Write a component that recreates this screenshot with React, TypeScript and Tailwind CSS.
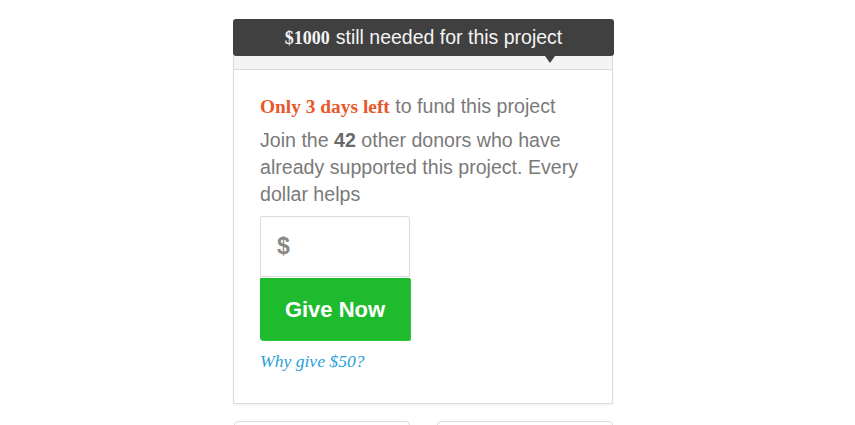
export default function App() {
  const sans = { fontFamily: '"Liberation Sans", Arial, sans-serif' };
  return (
    <div className="w-[855px] h-[425px] bg-white overflow-hidden" style={sans}>
      <div className="pl-[233px] pt-[19px]">
        <div className="w-[381px] relative">
          <div className="relative z-10 h-[37px] bg-[#404040] rounded-[3px] flex items-center justify-center text-[19.5px] text-[#f4f4f4]">
            <span style={{ fontFamily: '"Liberation Serif", serif' }} className="font-bold text-[18px] mr-[6px] mt-[2px]">$1000</span>
            <span>still needed for this project</span>
            <div className="absolute left-[312px] top-[37px] w-0 h-0 border-l-[5px] border-r-[5px] border-t-[7px] border-l-transparent border-r-transparent border-t-[#404040]" />
          </div>
          <div className="w-[380px] border-x border-b border-[#dcdcdc] shadow-[0_1px_2px_rgba(0,0,0,0.06)]">
            <div className="h-[14px] bg-[#f4f4f4] border-b border-[#dcdcdc]" />
            <div className="pl-[26px] pr-[20px] pt-[23px] pb-[31px]">
              <div className="text-[19.6px] leading-[27px] text-[#7a7a7a]">
                <span style={{ fontFamily: '"Liberation Serif", serif' }} className="font-bold text-[19.4px] text-[#e8572a]">Only 3 days left</span>{' '}
                to fund this project
              </div>
              <p className="mt-[7px] text-[19.6px] leading-[27px] text-[#7a7a7a]">
                Join the <b className="text-[#6a6a6a]">42</b> other donors who have already supported this project. Every dollar helps
              </p>
              <div className="mt-[8px] w-[150px] h-[61px] border border-[#dcdcdc] rounded-t-[2px] flex items-center pl-[16px] text-[23px] font-bold text-[#888]">
                $
              </div>
              <button className="mt-[1px] w-[150px] h-[62px] bg-[#1fbb2f] rounded-b-[2px] text-white font-bold text-[22px] flex items-center justify-center shadow-[1px_1px_0_#26c93a]">
                Give Now
              </button>
              <div style={{ fontFamily: '"Liberation Serif", serif' }} className="mt-[10px] italic text-[17.6px] text-[#2a9fd6] leading-[22px]">
                Why give $50?
              </div>
            </div>
          </div>
          <div className="mt-[17px] flex gap-[27px] pl-[1px]">
            <div className="w-[176px] h-[20px] border border-[#dcdcdc] rounded-t-[4px]" />
            <div className="w-[176px] h-[20px] border border-[#dcdcdc] rounded-t-[4px]" />
          </div>
        </div>
      </div>
    </div>
  );
}
